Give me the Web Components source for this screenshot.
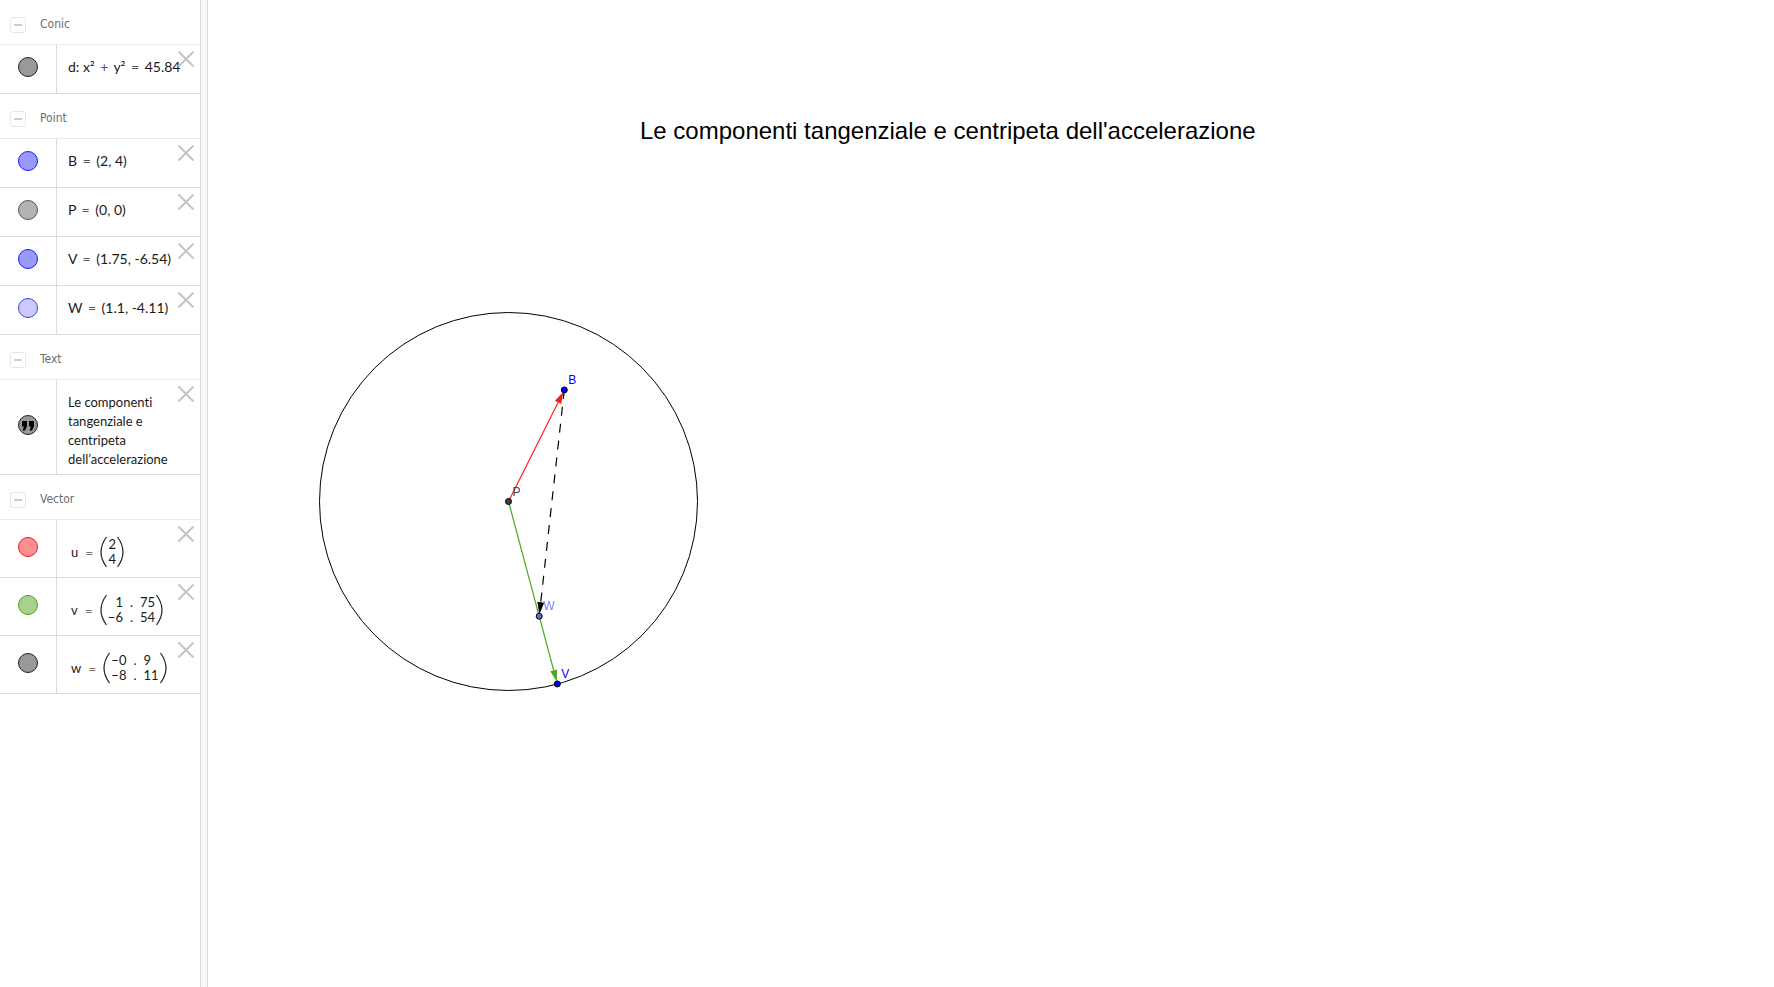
<!DOCTYPE html>
<html lang="it">
<head>
<meta charset="utf-8">
<title>Le componenti tangenziale e centripeta dell'accelerazione</title>
<style>
html, body { margin: 0; height: 100%; background: #fff; }
</style>
</head>
<body>
<geo-app>
  <algebra-view>
    <algebra-group label="Conic">
      <algebra-row fill="#999999" stroke="#222222" name="d">d: x² <math-op>+</math-op> y² <math-op>=</math-op> 45.84</algebra-row>
    </algebra-group>
    <algebra-group label="Point">
      <algebra-row fill="#9999ff" stroke="#1a1aff" name="B">B <math-op>=</math-op> (2, 4)</algebra-row>
      <algebra-row fill="#b3b3b3" stroke="#555555" name="P">P <math-op>=</math-op> (0, 0)</algebra-row>
      <algebra-row fill="#9999ff" stroke="#1a1aff" name="V">V <math-op>=</math-op> (1.75, -6.54)</algebra-row>
      <algebra-row fill="#cacaff" stroke="#4444cc" name="W">W <math-op>=</math-op> (1.1, -4.11)</algebra-row>
    </algebra-group>
    <algebra-group label="Text">
      <algebra-row kind="text" fill="#999999" stroke="#222222" name="text1">Le componenti tangenziale e centripeta dell’accelerazione</algebra-row>
    </algebra-group>
    <algebra-group label="Vector">
      <algebra-row kind="vector" fill="#ff8f8f" stroke="#e81c1c" name="u"><column-vector name="u" rows="2|4"></column-vector></algebra-row>
      <algebra-row kind="vector" fill="#a8d18e" stroke="#4aa520" name="v"><column-vector name="v" rows="1 . 75|−6 . 54"></column-vector></algebra-row>
      <algebra-row kind="vector" fill="#999999" stroke="#222222" name="w"><column-vector name="w" rows="−0 . 9|−8 . 11"></column-vector></algebra-row>
    </algebra-group>
  </algebra-view>
  <graphics-view></graphics-view>
</geo-app>
<script>
class View extends HTMLElement {
  connectedCallback() {
    if (!this.shadowRoot) this.attachShadow({ mode: 'open' }).innerHTML = this.render();
  }
}

customElements.define('geo-app', class extends View {
  render() {
    return `<style>
      :host { display: grid; grid-template-columns: 200px 8px 1fr; min-height: 100vh; }
      .splitter { box-sizing: border-box; grid-column: 2; grid-row: 1; background: #f8f8f8; border: solid #dcdcdc; border-width: 0 1px; }
      ::slotted(algebra-view) { grid-column: 1; grid-row: 1; }
      ::slotted(graphics-view) { grid-column: 3; grid-row: 1; }
    </style><slot></slot><div class="splitter"></div>`;
  }
});

customElements.define('algebra-view', class extends View {
  render() {
    return `<style>
      :host { display: block; min-width: 0; }
    </style><slot></slot>`;
  }
});

customElements.define('algebra-group', class extends View {
  render() {
    return `<style>
      :host { display: block; }
      header { box-sizing: border-box; display: flex; align-items: center; gap: 14px; height: 45px; padding: 6px 10px 0; border-bottom: 1px solid #ebebeb; }
      button { box-sizing: border-box; width: 16px; height: 16px; padding: 0; border: 1px solid #e6e6e6; border-radius: 3px; background: #fff; display: grid; place-items: center; }
      button::before { content: ""; width: 8px; height: 2px; background: #cccccc; }
      h2 { margin: 0 0 2px; font: 12px/16px "DejaVu Sans Condensed", "DejaVu Sans", sans-serif; color: #6e6e6e; }
    </style>
    <header><button type="button" aria-label="Collapse ${this.getAttribute('label')}"></button><h2>${this.getAttribute('label')}</h2></header>
    <slot></slot>`;
  }
});

customElements.define('math-op', class extends View {
  render() {
    return `<style>:host { display: inline; margin: 0 2px; color: #555; }</style><slot></slot>`;
  }
});

customElements.define('algebra-row', class extends View {
  render() {
    const kind = this.getAttribute('kind');
    const name = this.getAttribute('name');
    const quote = kind === 'text'
      ? `<path fill="#000" d="M4 6h5v5.500l-2 4h-2.500l1.500-4h-2zM11 6h5v5.500l-2 4h-2.500l1.500-4h-2z"/>` : '';
    return `<style>
      :host { box-sizing: border-box; position: relative; display: grid; grid-template-columns: 56px 1fr; height: 49px; border-bottom: 1px solid #dcdcdc; color: #1a1a1a; font: 14px/19px Lato, sans-serif; font-variant-ligatures: none; }
      :host([kind="text"]) { height: 95px; font-size: 13px; }
      :host([kind="vector"]) { height: 58px; }
      .marble { padding: 0 0 4px; border: 0; background: none; display: grid; place-items: center; }
      .marble svg { display: block; }
      .value { border-left: 1px solid #dcdcdc; padding: 12px 22px 0 11px; overflow: hidden; white-space: nowrap; }
      :host([kind="text"]) .value { padding: 13px 28px 0 11px; white-space: normal; }
      :host([kind="vector"]) .value { padding: 16px 0 0 14px; }
      .delete { position: absolute; top: 6px; right: 6px; width: 16px; height: 16px; padding: 0; border: 0; background: none; }
      .delete svg { display: block; }
    </style>
    <button class="marble" type="button" aria-label="Show or hide ${name}">
      <svg width="20" height="20" viewBox="0 0 20 20"><circle cx="10" cy="10" r="9.500" fill="${this.getAttribute('fill')}" stroke="${this.getAttribute('stroke')}"/>${quote}</svg>
    </button>
    <div class="value"><slot></slot></div>
    <button class="delete" type="button" aria-label="Delete ${name}">
      <svg width="16" height="16" viewBox="0 0 16 16"><path d="M.5.5l15 15M15.500.5l-15 15" stroke="#c4c4c4" stroke-width="2"/></svg>
    </button>`;
  }
});

customElements.define('column-vector', class extends View {
  render() {
    const rows = this.getAttribute('rows').split('|').map(r => r.split(' '));
    const cells = rows.map(r => '<tr>' + r.map(c => `<td>${c}</td>`).join('') + '</tr>').join('');
    const paren = d => `<svg width="7" height="32" viewBox="0 0 7 32"><path d="${d}" fill="none" stroke="#222" stroke-width="1.200"/></svg>`;
    return `<style>
      :host { display: flex; align-items: center; height: 32px; font: 13px/15px Lato, sans-serif; color: #1a1a1a; }
      .eq { margin: 0 7px; color: #777; font-size: 14px; }
      svg { flex: none; }
      table { border-collapse: collapse; margin: 0 1px; }
      td { padding: 0; text-align: right; }
      td:nth-child(2) { padding: 0 7px; }
      td:nth-child(3) { text-align: left; }
    </style>
    <span>${this.getAttribute('name')}</span><span class="eq">=</span>${paren('M6.500 1Q-4.500 16 6.500 31')}<table>${cells}</table>${paren('M.5 1Q11.500 16 .5 31')}`;
  }
});

customElements.define('graphics-view', class extends View {
  render() {
    const unit = 27.9, ox = 300.5, oy = 501.5;
    const at = (x, y) => [ox + x * unit, oy - y * unit];
    const P = at(0, 0), B = at(2, 4), V = at(1.75, -6.54), W = at(1.1, -4.11);
    const arrow = (a, b, color, dash) => {
      const dx = b[0] - a[0], dy = b[1] - a[1], len = Math.hypot(dx, dy);
      const ux = dx / len, uy = dy / len;
      const tip = [b[0] - ux * 2, b[1] - uy * 2];
      const base = [tip[0] - ux * 12, tip[1] - uy * 12];
      return `<line x1="${a[0]}" y1="${a[1]}" x2="${base[0]}" y2="${base[1]}" stroke="${color}" stroke-width="1.200" ${dash || ''}/>
        <polygon fill="${color}" points="${tip} ${base[0] - uy * 3.500},${base[1] + ux * 3.500} ${base[0] + uy * 3.500},${base[1] - ux * 3.500}"/>`;
    };
    const dot = (p, fill) => `<circle cx="${p[0]}" cy="${p[1]}" r="3" fill="${fill}" stroke="#000"/>`;
    const tag = (p, t, color) => `<text x="${p[0] + 4}" y="${p[1] - 6}" fill="${color}">${t}</text>`;
    return `<style>
      :host { display: block; min-width: 0; overflow: hidden; }
      svg { display: block; width: 100%; height: 100%; }
      text { font: 12px "Liberation Sans", Arial, sans-serif; }
      .title { font-size: 24px; }
    </style>
    <svg role="img" aria-label="Circle with vectors">
      <circle cx="${ox}" cy="${oy}" r="189" fill="none" stroke="#000"/>
      ${arrow(P, B, '#ff1a1a')}
      ${arrow(P, V, '#4da622')}
      ${arrow(B, W, '#000', 'stroke-dasharray="9 8"')}
      ${dot(P, '#404040')}${dot(B, '#0000ff')}${dot(V, '#0000ff')}${dot(W, '#6666e6')}
      ${tag(P, 'P', '#444')}${tag(B, 'B', '#0000ff')}${tag(V, 'V', '#0000ff')}${tag(W, 'W', '#8080ff')}
      <text class="title" x="432" y="139">Le componenti tangenziale e centripeta dell'accelerazione</text>
    </svg>`;
  }
});
</script>
</body>
</html>
